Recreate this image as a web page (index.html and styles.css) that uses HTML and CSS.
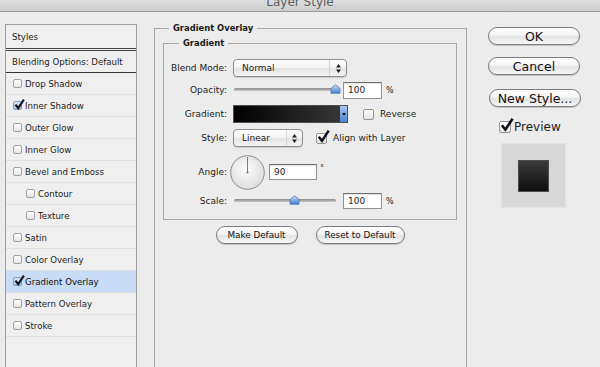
FILE: index.html
```html
<!DOCTYPE html>
<html>
<head>
<meta charset="utf-8">
<title>Layer Style</title>
<link rel="stylesheet" href="styles.css">
</head>
<body>
<div class="titlebar"><span class="title">Layer Style</span></div>
<div class="content">
  <div class="sidebar">
    <div class="srow head">Styles</div>
    <div class="srow blend">Blending Options: Default</div>
    <div class="srow"><span class="cb"></span>Drop Shadow</div>
    <div class="srow"><span class="cb on"><svg class="tick" viewBox="0 0 12 12"><path d="M1.6 6.2 L4.6 10 L10.8 0.6" fill="none" stroke="#10121c" stroke-width="2.3"/></svg></span>Inner Shadow</div>
    <div class="srow"><span class="cb"></span>Outer Glow</div>
    <div class="srow"><span class="cb"></span>Inner Glow</div>
    <div class="srow"><span class="cb"></span>Bevel and Emboss</div>
    <div class="srow sub"><span class="cb"></span>Contour</div>
    <div class="srow sub"><span class="cb"></span>Texture</div>
    <div class="srow"><span class="cb"></span>Satin</div>
    <div class="srow"><span class="cb"></span>Color Overlay</div>
    <div class="srow sel"><span class="cb on"><svg class="tick" viewBox="0 0 12 12"><path d="M1.6 6.2 L4.6 10 L10.8 0.6" fill="none" stroke="#10121c" stroke-width="2.3"/></svg></span>Gradient Overlay</div>
    <div class="srow"><span class="cb"></span>Pattern Overlay</div>
    <div class="srow"><span class="cb"></span>Stroke</div>
  </div>

  <fieldset class="group outer">
    <legend>Gradient Overlay</legend>
    <fieldset class="group inner">
      <legend>Gradient</legend>
      <div class="row r-blend">
        <span class="lbl">Blend Mode:</span>
        <div class="ctl">
          <div class="select w-blend"><span class="val">Normal</span><span class="arrows"><svg width="5" height="9" viewBox="0 0 5 9"><polygon points="0,3.5 2.5,0 5,3.5" fill="#222"/><polygon points="0,5.5 2.5,9 5,5.5" fill="#222"/></svg></span></div>
        </div>
      </div>
      <div class="row r-op">
        <span class="lbl">Opacity:</span>
        <div class="ctl">
          <div class="slider"><span class="track"></span><svg class="thumb" style="left:calc(100% - 6px)" width="11" height="10" viewBox="0 0 11 10"><defs><linearGradient id="tg1" x1="0" y1="0" x2="0" y2="1"><stop offset="0" stop-color="#cfe0f7"/><stop offset="1" stop-color="#3f7fd3"/></linearGradient></defs><path d="M1 4.5 L5.5 0.7 L10 4.5 V9.3 H1 Z" fill="url(#tg1)" stroke="#4d76ad" stroke-width="0.8"/></svg></div>
          <span class="num">100</span><span class="pct">%</span>
        </div>
      </div>
      <div class="row r-grad">
        <span class="lbl">Gradient:</span>
        <div class="ctl">
          <div class="gbar"><span class="drop"><svg width="4" height="3" viewBox="0 0 4 3"><polygon points="0,0 4,0 2,3" fill="#1a1a1a"/></svg></span></div>
          <span class="cb lg gap-rev"></span><span class="clbl">Reverse</span>
        </div>
      </div>
      <div class="row r-style">
        <span class="lbl">Style:</span>
        <div class="ctl">
          <div class="select w-style"><span class="val">Linear</span><span class="arrows"><svg width="5" height="9" viewBox="0 0 5 9"><polygon points="0,3.5 2.5,0 5,3.5" fill="#222"/><polygon points="0,5.5 2.5,9 5,5.5" fill="#222"/></svg></span></div>
          <span class="cb lg gap-align"><svg class="tick" viewBox="0 0 12 12"><path d="M1.6 6.2 L4.6 10 L10.8 0.6" fill="none" stroke="#10121c" stroke-width="2.3"/></svg></span><span class="clbl">Align with Layer</span>
        </div>
      </div>
      <div class="row r-angle">
        <span class="lbl">Angle:</span>
        <div class="ctl">
          <svg class="dial" width="35" height="35" viewBox="0 0 35 35"><defs><radialGradient id="dg" cx="0.45" cy="0.4" r="0.6"><stop offset="0" stop-color="#fbfbfb"/><stop offset="1" stop-color="#dedede"/></radialGradient></defs><circle cx="17.5" cy="17.5" r="16.8" fill="url(#dg)" stroke="#8c8c8c" stroke-width="1"/><line x1="17.5" y1="17.5" x2="17.5" y2="2" stroke="#7d7d7d" stroke-width="1"/><circle cx="17.5" cy="17.5" r="1.1" fill="#777"/></svg>
          <span class="num angle">90</span><span class="deg">°</span>
        </div>
      </div>
      <div class="row r-scale">
        <span class="lbl">Scale:</span>
        <div class="ctl">
          <div class="slider"><span class="track"></span><svg class="thumb" style="left:calc(60% - 6px)" width="11" height="10" viewBox="0 0 11 10"><defs><linearGradient id="tg2" x1="0" y1="0" x2="0" y2="1"><stop offset="0" stop-color="#cfe0f7"/><stop offset="1" stop-color="#3f7fd3"/></linearGradient></defs><path d="M1 4.5 L5.5 0.7 L10 4.5 V9.3 H1 Z" fill="url(#tg2)" stroke="#4d76ad" stroke-width="0.8"/></svg></div>
          <span class="num">100</span><span class="pct">%</span>
        </div>
      </div>
    </fieldset>
    <div class="defaults">
      <button class="pill sm w-make">Make Default</button>
      <button class="pill sm w-reset">Reset to Default</button>
    </div>
  </fieldset>

  <div class="actions">
    <button class="pill lgb">OK</button>
    <button class="pill lgb b-cancel">Cancel</button>
    <button class="pill lgb b-new">New Style...</button>
    <div class="preview"><span class="cb xl"><svg class="tick" viewBox="0 0 12 12"><path d="M1.6 6.2 L4.6 10 L10.8 0.6" fill="none" stroke="#10121c" stroke-width="2.2"/></svg></span><span class="plbl">Preview</span></div>
    <div class="swatch"><div class="swatch-inner"></div></div>
  </div>
</div>
</body>
</html>
```
FILE: styles.css
```css
* { box-sizing: border-box; }
html, body { margin: 0; padding: 0; }
body {
  width: 600px;
  height: 367px;
  overflow: hidden;
  background: #ececec;
  font-family: "DejaVu Sans", sans-serif;
  font-size: 9px;
  color: #1c1c1c;
}

/* title bar */
.titlebar {
  height: 12px;
  overflow: hidden;
  background: linear-gradient(#dedede, #cdcdcd);
  border-bottom: 1px solid #9a9a9a;
  text-align: center;
}
.title {
  display: block;
  margin-top: -5px;
  font-size: 12px;
  line-height: 14px;
  color: #5e5e5e;
}

.content { display: flex; align-items: flex-start; }

/* sidebar */
.sidebar {
  margin: 12px 0 0 5px;
  width: 132px;
  height: 343px;
  flex: none;
  border: 1px solid #9e9e9e;
  border-bottom: 0;
  background: #efefef;
  font-size: 8.6px;
}
.srow {
  display: flex;
  align-items: center;
  height: 22px;
  padding-left: 7px;
  border-bottom: 1px solid #e0e0e0;
  white-space: nowrap;
}
.srow.head { height: 26px; padding-left: 6px; border-bottom: 3px double #444; }
.srow.blend { padding-left: 6px; border-bottom: 1px solid #333; }
.srow.sub { padding-left: 20px; }
.srow.sel { background: #c9dcf5; color: #0c0c0c; }

/* checkboxes */
.cb {
  position: relative;
  display: inline-block;
  flex: none;
  width: 9px;
  height: 9px;
  margin-right: 3px;
  border: 1px solid #a3a3a3;
  border-radius: 2px;
  background: linear-gradient(#ffffff, #e4e4e4);
}
.cb.on { background: linear-gradient(#dce8f8, #a8c5ea); border-color: #7f9bc0; }
.cb .tick { position: absolute; left: 0; top: -3px; width: 11px; height: 11px; overflow: visible; }
.cb.lg { width: 11px; height: 11px; margin-right: 0; border-color: #979797; }
.cb.lg .tick { width: 13px; height: 13px; left: 0; top: -4px; }
.cb.xl { width: 12px; height: 12px; margin-right: 0; border-color: #979797; }
.cb.xl .tick { width: 14px; height: 14px; left: 0; top: -4px; }

/* fieldsets */
.group {
  margin: 0;
  padding: 0;
  min-width: 0;
  border: 1px solid #a8a8a8;
}
.group > legend {
  padding: 0 4px;
  font-weight: bold;
  font-size: 8.4px;
  line-height: 12px;
  color: #1a1a1a;
}
.outer {
  flex: none;
  margin: 10px 0 0 17px;
  width: 313px;
  height: 345px;
  padding: 3px 9px 0 8px;
  border-bottom: 0;
}
.outer > legend { margin-left: 6px; }
.inner {
  width: 294px;
  padding: 10px 0 10px 0;
}
.inner > legend { margin-left: 15px; }

/* form rows */
.row {
  display: grid;
  grid-template-columns: 63px auto;
  column-gap: 6px;
  align-items: center;
  height: 18px;
}
.r-op { margin-top: 4px; }
.r-grad { margin-top: 6px; }
.r-style { margin-top: 6px; }
.r-angle { margin-top: 7px; height: 36px; }
.r-scale { margin-top: 3px; height: 16px; }
.lbl { text-align: right; white-space: nowrap; }
.ctl { display: flex; align-items: center; white-space: nowrap; }

.select {
  display: flex;
  align-items: center;
  height: 18px;
  padding-left: 8px;
  border: 1px solid #8d8d8d;
  border-radius: 4px;
  background: linear-gradient(#ffffff, #f2f2f2 48%, #e3e3e3 52%, #f4f4f4);
  box-shadow: 0 1px 1px rgba(0, 0, 0, 0.15);
}
.select .val { flex: 1; }
.select .arrows {
  display: flex;
  align-items: center;
  justify-content: center;
  height: 100%;
  border-left: 1px solid #d3d3d3;
}
.w-blend { width: 114px; }
.w-blend .arrows { width: 17px; }
.w-style { width: 70px; }
.w-style .arrows { width: 16px; }

.slider { position: relative; width: 102px; height: 18px; margin-left: 1px; flex: none; }
.r-scale .slider { height: 16px; }
.track {
  position: absolute;
  left: 0;
  right: 0;
  top: 7px;
  height: 3px;
  border-radius: 2px;
  background: linear-gradient(#8a8a8a, #c8c8c8);
}
.r-scale .track { top: 6px; }
.thumb { position: absolute; top: 3px; }
.r-scale .thumb { top: 2px; }

.num {
  display: block;
  flex: none;
  width: 39px;
  height: 17px;
  margin-left: 7px;
  padding-left: 4px;
  line-height: 15px;
  border: 1px solid #929292;
  border-top-color: #707070;
  background: #fff;
  box-shadow: inset 0 1px 1px rgba(0, 0, 0, 0.12);
}
.r-scale .num { height: 16px; line-height: 14px; }
.num.angle { width: 48px; height: 16px; line-height: 14px; margin-left: 4px; }
.pct { margin-left: 4px; font-size: 8px; }
.deg { align-self: flex-start; margin: 9px 0 0 3px; font-size: 8px; }
.dial { display: block; margin-left: -3px; flex: none; }

.gbar {
  display: flex;
  justify-content: flex-end;
  width: 115px;
  height: 18px;
  flex: none;
  border: 1px solid #4f4f4f;
  background: linear-gradient(90deg, #000000, #3a3a3a);
}
.gbar .drop {
  display: flex;
  align-items: center;
  justify-content: center;
  width: 7px;
  background: linear-gradient(#a9c9f2, #4a82d4);
}
.gap-rev { margin-left: 15px; }
.gap-align { margin-left: 13px; }
.clbl { margin-left: 6px; }

/* buttons */
.pill {
  display: flex;
  align-items: center;
  justify-content: center;
  padding: 0;
  font-family: "DejaVu Sans", sans-serif;
  color: #111;
  border: 1px solid #7b7b7b;
  border-radius: 10px;
  background: linear-gradient(#ffffff, #f4f4f4 45%, #e3e3e3 55%, #f8f8f8);
  box-shadow: 0 1px 1px rgba(0, 0, 0, 0.18);
  white-space: nowrap;
}
.defaults { display: flex; justify-content: center; gap: 18px; margin-top: 6px; }
.pill.sm { height: 18px; font-size: 8.8px; }
.w-make { width: 82px; }
.w-reset { width: 89px; }

.actions {
  flex: none;
  display: flex;
  flex-direction: column;
  align-items: flex-start;
  width: 93px;
  margin: 15px 0 0 21px;
}
.pill.lgb { width: 92px; height: 18px; font-size: 12.5px; }
.b-cancel { margin-top: 12px; }
.b-new { margin-top: 14px; margin-left: 1px; }
.preview {
  display: flex;
  align-items: center;
  height: 12px;
  margin: 14px 0 0 11px;
  font-size: 12px;
}
.plbl { margin-left: 3px; }
.swatch {
  display: flex;
  align-items: center;
  justify-content: center;
  width: 65px;
  height: 65px;
  margin: 10px 0 0 13px;
  background: #d7d7d7;
  border: 1px solid #e2e2e2;
}
.swatch-inner {
  width: 31px;
  height: 32px;
  border: 1px solid #4a4a4a;
  background: linear-gradient(#3c3c3c, #0e0e0e);
}
```
